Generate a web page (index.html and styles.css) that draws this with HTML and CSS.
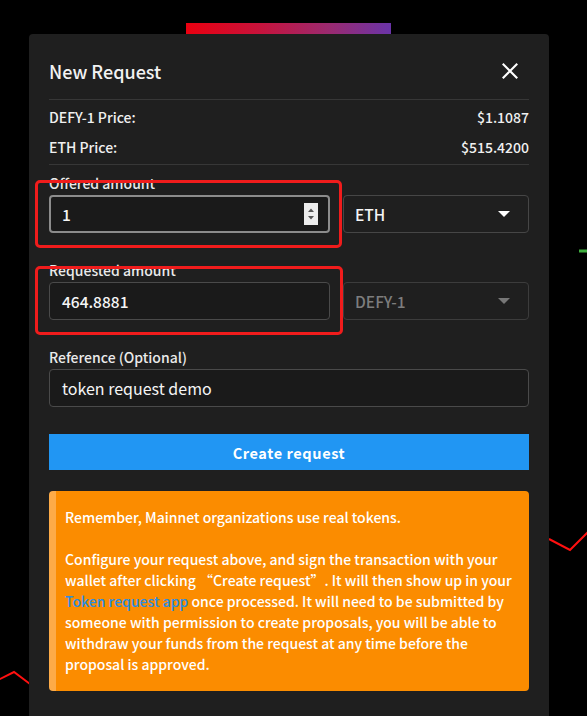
FILE: index.html
```html
<!DOCTYPE html>
<html lang="en">
<head>
<meta charset="utf-8">
<title>New Request</title>
<link rel="stylesheet" href="styles.css">
</head>
<body>
<div class="backdrop">
  <div class="gradient-bar"></div>
  <svg class="chart" width="587" height="716" viewBox="0 0 587 716">
    <line x1="579" y1="251" x2="587" y2="251" stroke="#3fae3f" stroke-width="3"/>
    <polyline points="549,539 570,550 590,530" fill="none" stroke="#ff1010" stroke-width="2"/>
    <polyline points="-2,680 14,672 30,684" fill="none" stroke="#ff1010" stroke-width="2"/>
  </svg>
</div>

<div class="panel">
  <div class="panel-header">
    <h1 class="panel-title">New Request</h1>
    <button class="close-btn" aria-label="Close">
      <svg width="16" height="16" viewBox="0 0 16 16"><path d="M1.5 1.5 L14.5 14.5 M14.5 1.5 L1.5 14.5" stroke="#fff" stroke-width="2.1" stroke-linecap="square"/></svg>
    </button>
  </div>

  <div class="prices">
    <div class="price-row"><span>DEFY-1 Price:</span><span>$1.1087</span></div>
    <div class="price-row"><span>ETH Price:</span><span>$515.4200</span></div>
  </div>

  <div class="field field-first">
    <label class="field-label">Offered amount</label>
    <div class="field-row">
      <div class="input input-focused">
        <span class="input-value">1</span>
        <span class="spinner">
          <svg width="14" height="22" viewBox="0 0 14 22"><path d="M4 9 L7 5.5 L10 9 Z M4 13 L7 16.5 L10 13 Z" fill="#555"/></svg>
        </span>
      </div>
      <div class="select">
        <span class="select-value">ETH</span>
        <span class="caret"></span>
      </div>
    </div>
    <div class="annot annot-offered"></div>
  </div>

  <div class="field">
    <label class="field-label">Requested amount</label>
    <div class="field-row">
      <div class="input">
        <span class="input-value">464.8881</span>
      </div>
      <div class="select select-disabled">
        <span class="select-value">DEFY-1</span>
        <span class="caret"></span>
      </div>
    </div>
    <div class="annot annot-requested"></div>
  </div>

  <div class="field">
    <label class="field-label">Reference (Optional)</label>
    <div class="input input-wide">
      <span class="input-value input-light">token request demo</span>
    </div>
  </div>

  <button class="create-btn">Create request</button>

  <div class="notice">
    <p>Remember, Mainnet organizations use real tokens.</p>
    <p>Configure your request above, and sign the transaction with your wallet after clicking “Create request”. It will then show up in your <a class="notice-link">Token request app</a> once processed. It will need to be submitted by someone with permission to create proposals, you will be able to withdraw your funds from the request at any time before the proposal is approved.</p>
  </div>
</div>
</body>
</html>
```

FILE: styles.css
```css
* { box-sizing: border-box; }

html, body {
  margin: 0;
  padding: 0;
  background: #000;
  height: 716px;
  overflow: hidden;
}

body {
  position: relative;
  font-family: "Noto Sans CJK SC", "Noto Sans", sans-serif;
  color: #fff;
}

.backdrop {
  position: absolute;
  inset: 0;
  z-index: 0;
}

.gradient-bar {
  position: absolute;
  left: 186px;
  top: 23px;
  width: 205px;
  height: 14px;
  background: linear-gradient(90deg, #ea0010, #c8123a 35%, #9a2a70 70%, #6a34a8);
}

.chart {
  position: absolute;
  left: 0;
  top: 0;
}

.panel {
  position: relative;
  z-index: 1;
  margin: 34px 0 0 29px;
  width: 520px;
  height: 700px;
  background: #1f1f1f;
  border-radius: 4px 4px 0 0;
  padding: 0 20px;
}

.panel-header {
  display: flex;
  align-items: center;
  justify-content: space-between;
  padding: 23px 0 14px;
  border-bottom: 1px solid #373737;
}

.panel-title {
  margin: 0;
  font-size: 18px;
  font-weight: 500;
  line-height: 28px;
  color: #f2f2f2;
}

.close-btn {
  background: none;
  border: 0;
  padding: 0;
  margin-right: 11px;
  width: 16px;
  height: 16px;
  display: flex;
}

.prices {
  padding: 7px 0 7px;
  border-bottom: 1px solid #373737;
  display: flex;
  flex-direction: column;
  gap: 10px;
}

.price-row {
  display: flex;
  justify-content: space-between;
  font-size: 14px;
  font-weight: 500;
  line-height: 20px;
  color: #f0f0f0;
}

.field {
  position: relative;
  margin-top: 28px;
}

.field-first {
  margin-top: 9px;
}

.field-label {
  display: block;
  font-size: 14px;
  font-weight: 500;
  line-height: 18px;
  margin-bottom: 3px;
  color: #eaeaea;
}

.field-row {
  display: flex;
  gap: 13px;
}

.input {
  position: relative;
  width: 281px;
  height: 38px;
  border: 1px solid #4a4a4a;
  border-radius: 4px;
  background: #1a1a1a;
  display: flex;
  align-items: center;
  padding: 0 12px;
}

.input-focused {
  border: 2px solid #8c8c8c;
  padding: 0 11px;
}

.input-wide {
  width: 480px;
}

.input-value {
  font-size: 15.5px;
  font-weight: 500;
  color: #f5f5f5;
}

.input-light {
  font-size: 16px;
  font-weight: 400;
}

.spinner {
  position: absolute;
  right: 10px;
  top: 6px;
  width: 14px;
  height: 22px;
  background: #ececec;
  display: flex;
}

.select {
  flex: 1;
  height: 38px;
  border: 1px solid #464646;
  border-radius: 4px;
  display: flex;
  align-items: center;
  justify-content: space-between;
  padding: 0 18px 0 11px;
}

.select-value {
  font-size: 15.5px;
  font-weight: 500;
  color: #f5f5f5;
}

.caret {
  width: 0;
  height: 0;
  border-left: 6px solid transparent;
  border-right: 6px solid transparent;
  border-top: 6px solid #fff;
}

.select-disabled {
  border-color: #3c3c3c;
}

.select-disabled .select-value {
  color: #7d7d7d;
}

.select-disabled .caret {
  border-top-color: #777;
}

.annot {
  position: absolute;
  left: -14px;
  width: 307px;
  border: 3px solid #f01c1c;
  border-radius: 5px;
  pointer-events: none;
}

.annot-offered {
  top: 6px;
  height: 68px;
}

.annot-requested {
  top: 5px;
  height: 69px;
  width: 308px;
}

.create-btn {
  display: block;
  width: 100%;
  height: 36px;
  margin-top: 27px;
  border: 0;
  border-radius: 0;
  background: #2196f3;
  color: #fff;
  font-family: inherit;
  font-size: 14.5px;
  font-weight: 700;
  letter-spacing: 0.6px;
}

.notice {
  margin-top: 21px;
  background: #fb8c00;
  border-left: 7px solid #fdab48;
  border-radius: 4px;
  padding: 16px 10px 16px 9px;
  font-size: 14px;
  font-weight: 500;
  line-height: 21px;
  color: #fff;
}

.notice p {
  margin: 0;
}

.notice p + p {
  margin-top: 21px;
}

.notice-link {
  color: #2a8de0;
}
```
